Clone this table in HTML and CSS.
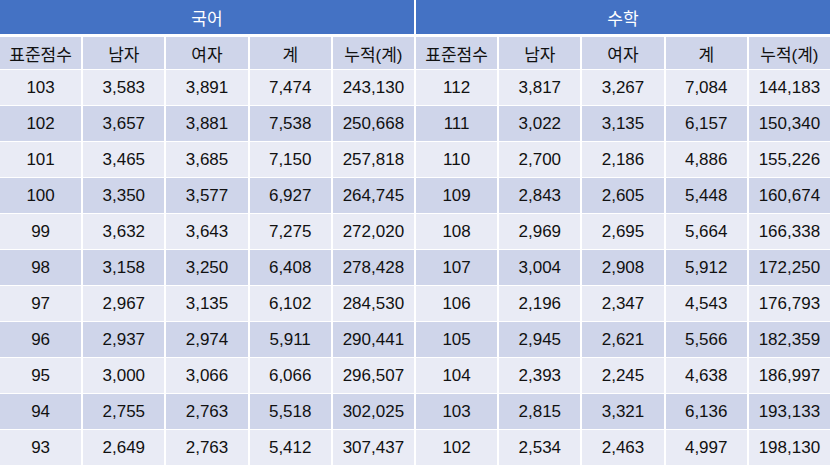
FILE: index.html
```html
<!DOCTYPE html>
<html lang="ko">
<head>
<meta charset="utf-8">
<link rel="stylesheet" href="styles.css">
</head>
<body>
<div class="grid">
  <div class="cell head span5">국어</div>
  <div class="cell head span5">수학</div>
  <div class="cell sub">표준점수</div><div class="cell sub">남자</div><div class="cell sub">여자</div><div class="cell sub">계</div><div class="cell sub">누적(계)</div>
  <div class="cell sub">표준점수</div><div class="cell sub">남자</div><div class="cell sub">여자</div><div class="cell sub">계</div><div class="cell sub">누적(계)</div>

  <div class="cell l">103</div><div class="cell l">3,583</div><div class="cell l">3,891</div><div class="cell l">7,474</div><div class="cell l">243,130</div><div class="cell l">112</div><div class="cell l">3,817</div><div class="cell l">3,267</div><div class="cell l">7,084</div><div class="cell l">144,183</div>
  <div class="cell d">102</div><div class="cell d">3,657</div><div class="cell d">3,881</div><div class="cell d">7,538</div><div class="cell d">250,668</div><div class="cell d">111</div><div class="cell d">3,022</div><div class="cell d">3,135</div><div class="cell d">6,157</div><div class="cell d">150,340</div>
  <div class="cell l">101</div><div class="cell l">3,465</div><div class="cell l">3,685</div><div class="cell l">7,150</div><div class="cell l">257,818</div><div class="cell l">110</div><div class="cell l">2,700</div><div class="cell l">2,186</div><div class="cell l">4,886</div><div class="cell l">155,226</div>
  <div class="cell d">100</div><div class="cell d">3,350</div><div class="cell d">3,577</div><div class="cell d">6,927</div><div class="cell d">264,745</div><div class="cell d">109</div><div class="cell d">2,843</div><div class="cell d">2,605</div><div class="cell d">5,448</div><div class="cell d">160,674</div>
  <div class="cell l">99</div><div class="cell l">3,632</div><div class="cell l">3,643</div><div class="cell l">7,275</div><div class="cell l">272,020</div><div class="cell l">108</div><div class="cell l">2,969</div><div class="cell l">2,695</div><div class="cell l">5,664</div><div class="cell l">166,338</div>
  <div class="cell d">98</div><div class="cell d">3,158</div><div class="cell d">3,250</div><div class="cell d">6,408</div><div class="cell d">278,428</div><div class="cell d">107</div><div class="cell d">3,004</div><div class="cell d">2,908</div><div class="cell d">5,912</div><div class="cell d">172,250</div>
  <div class="cell l">97</div><div class="cell l">2,967</div><div class="cell l">3,135</div><div class="cell l">6,102</div><div class="cell l">284,530</div><div class="cell l">106</div><div class="cell l">2,196</div><div class="cell l">2,347</div><div class="cell l">4,543</div><div class="cell l">176,793</div>
  <div class="cell d">96</div><div class="cell d">2,937</div><div class="cell d">2,974</div><div class="cell d">5,911</div><div class="cell d">290,441</div><div class="cell d">105</div><div class="cell d">2,945</div><div class="cell d">2,621</div><div class="cell d">5,566</div><div class="cell d">182,359</div>
  <div class="cell l">95</div><div class="cell l">3,000</div><div class="cell l">3,066</div><div class="cell l">6,066</div><div class="cell l">296,507</div><div class="cell l">104</div><div class="cell l">2,393</div><div class="cell l">2,245</div><div class="cell l">4,638</div><div class="cell l">186,997</div>
  <div class="cell d">94</div><div class="cell d">2,755</div><div class="cell d">2,763</div><div class="cell d">5,518</div><div class="cell d">302,025</div><div class="cell d">103</div><div class="cell d">2,815</div><div class="cell d">3,321</div><div class="cell d">6,136</div><div class="cell d">193,133</div>
  <div class="cell l">93</div><div class="cell l">2,649</div><div class="cell l">2,763</div><div class="cell l">5,412</div><div class="cell l">307,437</div><div class="cell l">102</div><div class="cell l">2,534</div><div class="cell l">2,463</div><div class="cell l">4,997</div><div class="cell l">198,130</div>
</div>
</body>
</html>
```
FILE: styles.css
```css
html, body {
  margin: 0;
  padding: 0;
  background: #ffffff;
}
.grid {
  width: 830px;
  height: 467px;
  display: grid;
  grid-template-columns: repeat(10, 1fr);
  grid-template-rows: 34px 34px repeat(11, 35px);
  column-gap: 2px;
  row-gap: 1px;
  font-family: "Liberation Sans", "Noto Sans CJK KR", Arial, sans-serif;
  font-size: 17px;
  color: #111111;
}
.cell {
  display: flex;
  align-items: center;
  justify-content: center;
  white-space: nowrap;
}
.span5 {
  grid-column: span 5;
}
.head {
  background: #4472c4;
  color: #ffffff;
  margin-bottom: -0px;
}
.sub {
  background: #cfd5ea;
  margin-top: 2px;
  height: 32px;
  align-self: end;
}
.l {
  background: #e9ebf5;
}
.d {
  background: #cfd5ea;
}
```
